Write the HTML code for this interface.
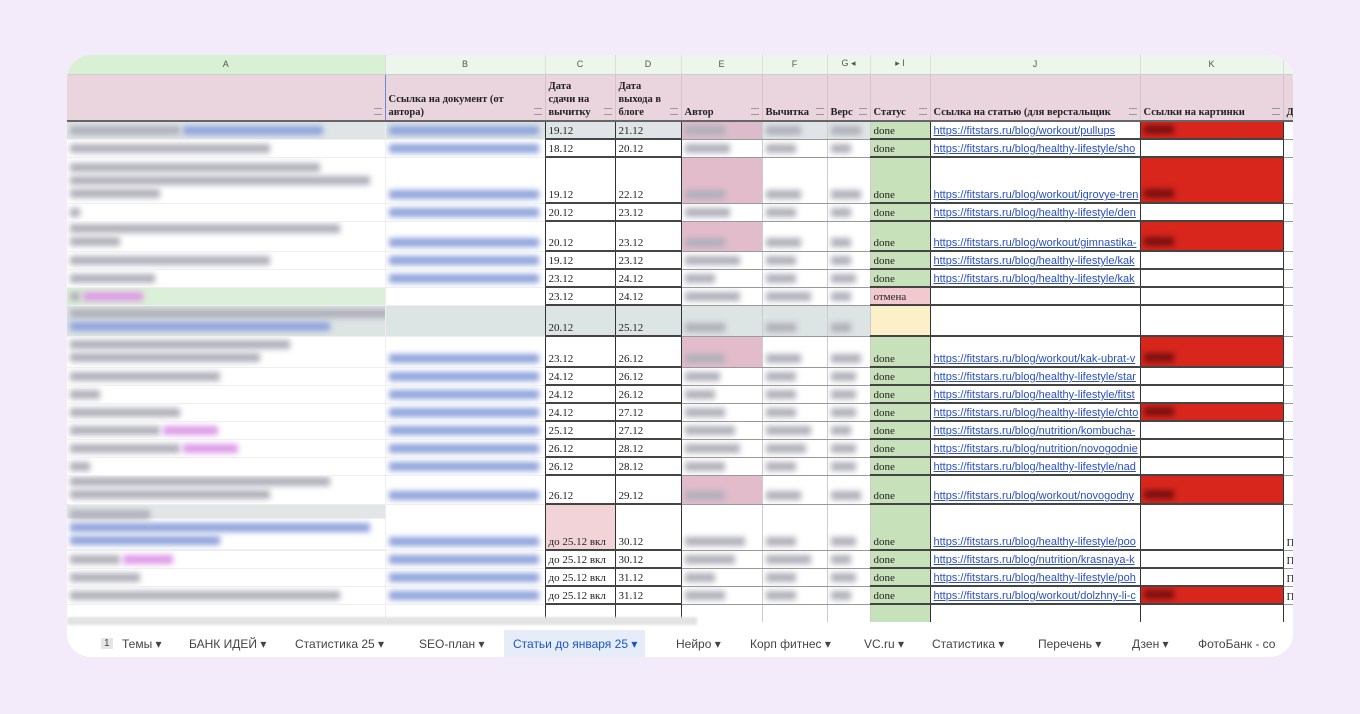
<!DOCTYPE html>
<html><head><meta charset="utf-8">
<style>
*{margin:0;padding:0;box-sizing:border-box}
body{width:1360px;height:714px;background:#f3ebfa;position:relative;overflow:hidden;font-family:"Liberation Serif","Noto Serif CJK SC",serif}
.card{position:absolute;left:67px;top:55px;width:1226px;height:602px;background:#fff;border-radius:24px;overflow:hidden}
table{border-collapse:collapse;table-layout:fixed;position:absolute;left:0;top:0;width:1240px}
td{border-right:1px solid #ccc;border-bottom:1px solid #999;font-size:11px;color:#222;vertical-align:bottom;padding:0 3px 1px;overflow:hidden;white-space:nowrap;height:18px}
tr.hdr td{height:19px;background:#edf6ec;text-align:center;font-family:"Liberation Sans",sans-serif;font-size:9px;color:#555;vertical-align:middle;border-bottom:1px solid #ccc;border-right:1px solid #ddd}
tr.hdr td.a{background:#d8f0d4}
tr.h2 td{height:47px;background:#ead5df;font-weight:bold;font-size:10.5px;line-height:13px;white-space:normal;border-bottom:2px solid #666;border-right:1px solid #d6c0ca;position:relative;padding-right:14px}
tr.h2 td::after{content:"";position:absolute;right:3px;bottom:5px;width:8px;height:5px;border-top:1px solid #999;border-bottom:1px solid #999}
.b{display:inline-block;height:9px;background:#b0b0ba;filter:blur(3px);vertical-align:middle;margin-bottom:3px}
.bl{background:#8fa3dc}
.bp{background:#dd9ae8}
.lk{font-family:"Liberation Sans",sans-serif;color:#2b4fc0;text-decoration:underline;font-size:11px}
.st{background:#c7e2bb}
.red{background:#d9261c}
.red .b{background:#7a1010;width:30px}
.pe{background:#e3bccb}
.cA{border-right:1px solid #eee;border-bottom-color:#eee}
.cB{border-right:1px solid #333;border-bottom-color:#eee}
.c{border-right:1px solid #333;border-bottom:2px solid #444}
.tabs{position:absolute;left:0;top:575px;width:1226px;height:27px;font-family:"Liberation Sans",sans-serif;font-size:12px;color:#444;background:#fff}
.tabs span{position:absolute;top:7px;white-space:nowrap}
.tabs .act{background:#e6edf9;color:#1a56c4;top:0;height:27px;padding-top:7px}
.scroll{position:absolute;left:0;top:562px;width:630px;height:8px;background:#e3e3e3;filter:blur(1px)}
</style></head><body>
<div class="card">
<table>
<colgroup><col style="width:318px"><col style="width:160px"><col style="width:70px"><col style="width:66px"><col style="width:81px"><col style="width:65px"><col style="width:43px"><col style="width:60px"><col style="width:210px"><col style="width:143px"><col style="width:24px"></colgroup>
<tr class="hdr"><td class="a">A</td><td>B</td><td>C</td><td>D</td><td>E</td><td>F</td><td>G ◂</td><td>▸ I</td><td>J</td><td>K</td><td></td></tr>
<tr class="h2"><td style="border-right:1px solid #6a8ad8"></td><td>Ссылка на документ (от автора)</td><td>Дата сдачи на вычитку</td><td>Дата выхода в блоге</td><td>Автор</td><td>Вычитка</td><td>Верс</td><td>Статус</td><td>Ссылка на статью (для верстальщик</td><td>Ссылки на картинки</td><td>Д</td></tr>

<tr style="background:#dfe5e6"><td class="cA"><i class="b" style="width:110px"></i> <i class="b bl" style="width:140px"></i></td><td class="cB"><i class="b bl" style="width:150px"></i></td><td class="c">19.12</td><td class="c">21.12</td><td style="background:#dcbccb"><i class="b" style="width:40px"></i></td><td><i class="b" style="width:35px"></i></td><td><i class="b" style="width:30px"></i></td><td class="st c">done</td><td class="c" style="background:#fff"><span class="lk">https://fitstars.ru/blog/workout/pullups</span></td><td class="red c"><i class="b"></i></td><td style="background:#fff"></td></tr>
<tr><td class="cA"><i class="b" style="width:200px"></i></td><td class="cB"><i class="b bl" style="width:150px"></i></td><td class="c">18.12</td><td class="c">20.12</td><td><i class="b" style="width:45px"></i></td><td><i class="b" style="width:30px"></i></td><td><i class="b" style="width:20px"></i></td><td class="st c">done</td><td class="c"><span class="lk">https://fitstars.ru/blog/healthy-lifestyle/sho</span></td><td class="c"></td><td></td></tr>
<tr><td class="cA" style="height:46px;line-height:13px;white-space:normal"><i class="b" style="width:250px"></i><br><i class="b" style="width:300px"></i><br><i class="b" style="width:90px"></i></td><td class="cB"><i class="b bl" style="width:150px"></i></td><td class="c">19.12</td><td class="c">22.12</td><td class="pe"><i class="b" style="width:40px"></i></td><td><i class="b" style="width:35px"></i></td><td><i class="b" style="width:30px"></i></td><td class="st c">done</td><td class="c"><span class="lk">https://fitstars.ru/blog/workout/igrovye-tren</span></td><td class="red c"><i class="b"></i></td><td></td></tr>
<tr><td class="cA"><i class="b" style="width:10px"></i></td><td class="cB"><i class="b bl" style="width:150px"></i></td><td class="c">20.12</td><td class="c">23.12</td><td><i class="b" style="width:45px"></i></td><td><i class="b" style="width:30px"></i></td><td><i class="b" style="width:20px"></i></td><td class="st c">done</td><td class="c"><span class="lk">https://fitstars.ru/blog/healthy-lifestyle/den</span></td><td class="c"></td><td></td></tr>
<tr><td class="cA" style="height:30px;line-height:13px;white-space:normal"><i class="b" style="width:270px"></i><br><i class="b" style="width:50px"></i></td><td class="cB"><i class="b bl" style="width:150px"></i></td><td class="c">20.12</td><td class="c">23.12</td><td class="pe"><i class="b" style="width:40px"></i></td><td><i class="b" style="width:35px"></i></td><td><i class="b" style="width:20px"></i></td><td class="st c">done</td><td class="c"><span class="lk">https://fitstars.ru/blog/workout/gimnastika-</span></td><td class="red c"><i class="b"></i></td><td></td></tr>
<tr><td class="cA"><i class="b" style="width:200px"></i></td><td class="cB"><i class="b bl" style="width:150px"></i></td><td class="c">19.12</td><td class="c">23.12</td><td><i class="b" style="width:55px"></i></td><td><i class="b" style="width:30px"></i></td><td><i class="b" style="width:20px"></i></td><td class="st c">done</td><td class="c"><span class="lk">https://fitstars.ru/blog/healthy-lifestyle/kak</span></td><td class="c"></td><td></td></tr>
<tr><td class="cA"><i class="b" style="width:85px"></i></td><td class="cB"><i class="b bl" style="width:150px"></i></td><td class="c">23.12</td><td class="c">24.12</td><td><i class="b" style="width:30px"></i></td><td><i class="b" style="width:30px"></i></td><td><i class="b" style="width:25px"></i></td><td class="st c">done</td><td class="c"><span class="lk">https://fitstars.ru/blog/healthy-lifestyle/kak</span></td><td class="c"></td><td></td></tr>
<tr><td class="cA" style="background:#dcefd8"><i class="b" style="width:10px"></i> <i class="b bp" style="width:60px"></i></td><td class="cB"></td><td class="c">23.12</td><td class="c">24.12</td><td><i class="b" style="width:55px"></i></td><td><i class="b" style="width:45px"></i></td><td><i class="b" style="width:20px"></i></td><td class="c" style="background:#f2c9cf">отмена</td><td class="c"></td><td class="c"></td><td></td></tr>
<tr style="background:#dde4e4"><td class="cA" style="height:31px;line-height:13px;white-space:normal"><i class="b" style="width:320px"></i><br><i class="b bl" style="width:260px"></i></td><td class="cB"></td><td class="c">20.12</td><td class="c">25.12</td><td><i class="b" style="width:40px"></i></td><td><i class="b" style="width:30px"></i></td><td><i class="b" style="width:20px"></i></td><td class="c" style="background:#fcf0c8"></td><td class="c" style="background:#fff"></td><td class="c" style="background:#fff"></td><td style="background:#fff"></td></tr>
<tr><td class="cA" style="height:31px;line-height:13px;white-space:normal"><i class="b" style="width:220px"></i><br><i class="b" style="width:190px"></i></td><td class="cB"><i class="b bl" style="width:150px"></i></td><td class="c">23.12</td><td class="c">26.12</td><td class="pe"><i class="b" style="width:40px"></i></td><td><i class="b" style="width:35px"></i></td><td><i class="b" style="width:30px"></i></td><td class="st c">done</td><td class="c"><span class="lk">https://fitstars.ru/blog/workout/kak-ubrat-v</span></td><td class="red c"><i class="b"></i></td><td></td></tr>
<tr><td class="cA"><i class="b" style="width:150px"></i></td><td class="cB"><i class="b bl" style="width:150px"></i></td><td class="c">24.12</td><td class="c">26.12</td><td><i class="b" style="width:35px"></i></td><td><i class="b" style="width:30px"></i></td><td><i class="b" style="width:25px"></i></td><td class="st c">done</td><td class="c"><span class="lk">https://fitstars.ru/blog/healthy-lifestyle/star</span></td><td class="c"></td><td></td></tr>
<tr><td class="cA"><i class="b" style="width:30px"></i></td><td class="cB"><i class="b bl" style="width:150px"></i></td><td class="c">24.12</td><td class="c">26.12</td><td><i class="b" style="width:30px"></i></td><td><i class="b" style="width:30px"></i></td><td><i class="b" style="width:25px"></i></td><td class="st c">done</td><td class="c"><span class="lk">https://fitstars.ru/blog/healthy-lifestyle/fitst</span></td><td class="c"></td><td></td></tr>
<tr><td class="cA"><i class="b" style="width:110px"></i></td><td class="cB"><i class="b bl" style="width:150px"></i></td><td class="c">24.12</td><td class="c">27.12</td><td><i class="b" style="width:40px"></i></td><td><i class="b" style="width:30px"></i></td><td><i class="b" style="width:25px"></i></td><td class="st c">done</td><td class="c"><span class="lk">https://fitstars.ru/blog/healthy-lifestyle/chto</span></td><td class="red c"><i class="b"></i></td><td></td></tr>
<tr><td class="cA"><i class="b" style="width:90px"></i> <i class="b bp" style="width:55px"></i></td><td class="cB"><i class="b bl" style="width:150px"></i></td><td class="c">25.12</td><td class="c">27.12</td><td><i class="b" style="width:50px"></i></td><td><i class="b" style="width:45px"></i></td><td><i class="b" style="width:20px"></i></td><td class="st c">done</td><td class="c"><span class="lk">https://fitstars.ru/blog/nutrition/kombucha-</span></td><td class="c"></td><td></td></tr>
<tr><td class="cA"><i class="b" style="width:110px"></i> <i class="b bp" style="width:55px"></i></td><td class="cB"><i class="b bl" style="width:150px"></i></td><td class="c">26.12</td><td class="c">28.12</td><td><i class="b" style="width:55px"></i></td><td><i class="b" style="width:40px"></i></td><td><i class="b" style="width:25px"></i></td><td class="st c">done</td><td class="c"><span class="lk">https://fitstars.ru/blog/nutrition/novogodnie</span></td><td class="c"></td><td></td></tr>
<tr><td class="cA"><i class="b" style="width:20px"></i></td><td class="cB"><i class="b bl" style="width:150px"></i></td><td class="c">26.12</td><td class="c">28.12</td><td><i class="b" style="width:40px"></i></td><td><i class="b" style="width:30px"></i></td><td><i class="b" style="width:25px"></i></td><td class="st c">done</td><td class="c"><span class="lk">https://fitstars.ru/blog/healthy-lifestyle/nad</span></td><td class="c"></td><td></td></tr>
<tr><td class="cA" style="height:29px;line-height:13px;white-space:normal"><i class="b" style="width:260px"></i><br><i class="b" style="width:200px"></i></td><td class="cB"><i class="b bl" style="width:150px"></i></td><td class="c">26.12</td><td class="c">29.12</td><td class="pe"><i class="b" style="width:40px"></i></td><td><i class="b" style="width:35px"></i></td><td><i class="b" style="width:30px"></i></td><td class="st c">done</td><td class="c"><span class="lk">https://fitstars.ru/blog/workout/novogodny</span></td><td class="red c"><i class="b"></i></td><td></td></tr>
<tr><td class="cA" style="height:46px;line-height:13px;white-space:normal;background:linear-gradient(#e2e6e6 0 14px,#fff 14px)"><i class="b" style="width:80px"></i><br><i class="b bl" style="width:300px"></i><br><i class="b bl" style="width:150px"></i></td><td class="cB"><i class="b bl" style="width:150px"></i></td><td class="c" style="background:#f2d3d8">до 25.12 вкл</td><td class="c">30.12</td><td><i class="b" style="width:60px"></i></td><td><i class="b" style="width:30px"></i></td><td><i class="b" style="width:25px"></i></td><td class="st c">done</td><td class="c"><span class="lk">https://fitstars.ru/blog/healthy-lifestyle/poo</span></td><td class="c"></td><td>П</td></tr>
<tr><td class="cA"><i class="b" style="width:50px"></i> <i class="b bp" style="width:50px"></i></td><td class="cB"><i class="b bl" style="width:150px"></i></td><td class="c">до 25.12 вкл</td><td class="c">30.12</td><td><i class="b" style="width:50px"></i></td><td><i class="b" style="width:45px"></i></td><td><i class="b" style="width:20px"></i></td><td class="st c">done</td><td class="c"><span class="lk">https://fitstars.ru/blog/nutrition/krasnaya-k</span></td><td class="c"></td><td>П</td></tr>
<tr><td class="cA"><i class="b" style="width:70px"></i></td><td class="cB"><i class="b bl" style="width:150px"></i></td><td class="c">до 25.12 вкл</td><td class="c">31.12</td><td><i class="b" style="width:30px"></i></td><td><i class="b" style="width:30px"></i></td><td><i class="b" style="width:25px"></i></td><td class="st c">done</td><td class="c"><span class="lk">https://fitstars.ru/blog/healthy-lifestyle/poh</span></td><td class="c"></td><td>П</td></tr>
<tr><td class="cA"><i class="b" style="width:270px"></i></td><td class="cB"><i class="b bl" style="width:150px"></i></td><td class="c">до 25.12 вкл</td><td class="c">31.12</td><td><i class="b" style="width:40px"></i></td><td><i class="b" style="width:30px"></i></td><td><i class="b" style="width:20px"></i></td><td class="st c">done</td><td class="c"><span class="lk">https://fitstars.ru/blog/workout/dolzhny-li-c</span></td><td class="red c"><i class="b"></i></td><td>П</td></tr>
<tr><td class="cA" style="height:14px;border-bottom:none"></td><td class="cB" style="border-bottom:none"></td><td class="c" style="border-bottom:none"></td><td class="c" style="border-bottom:none"></td><td style="border-bottom:none"></td><td style="border-bottom:none"></td><td style="border-bottom:none"></td><td class="st c" style="border-bottom:none"></td><td class="c" style="border-bottom:none"></td><td class="c" style="border-bottom:none"></td><td style="border-bottom:none"></td></tr>
</table>
<div class="scroll"></div>
<div class="tabs">
<span style="left:34px;background:#e6e6e6;padding:0 3px;font-size:10px;top:8px">1</span>
<span style="left:55px">Темы ▾</span>
<span style="left:122px">БАНК ИДЕЙ ▾</span>
<span style="left:228px">Статистика 25 ▾</span>
<span style="left:352px">SEO-план ▾</span>
<span class="act" style="left:437px;padding-left:9px;padding-right:8px">Статьи до января 25 ▾</span>
<span style="left:609px">Нейро ▾</span>
<span style="left:683px">Корп фитнес ▾</span>
<span style="left:797px">VC.ru ▾</span>
<span style="left:865px">Статистика ▾</span>
<span style="left:971px">Перечень ▾</span>
<span style="left:1065px">Дзен ▾</span>
<span style="left:1131px">ФотоБанк - со</span>
</div>
</div>
</body></html>
